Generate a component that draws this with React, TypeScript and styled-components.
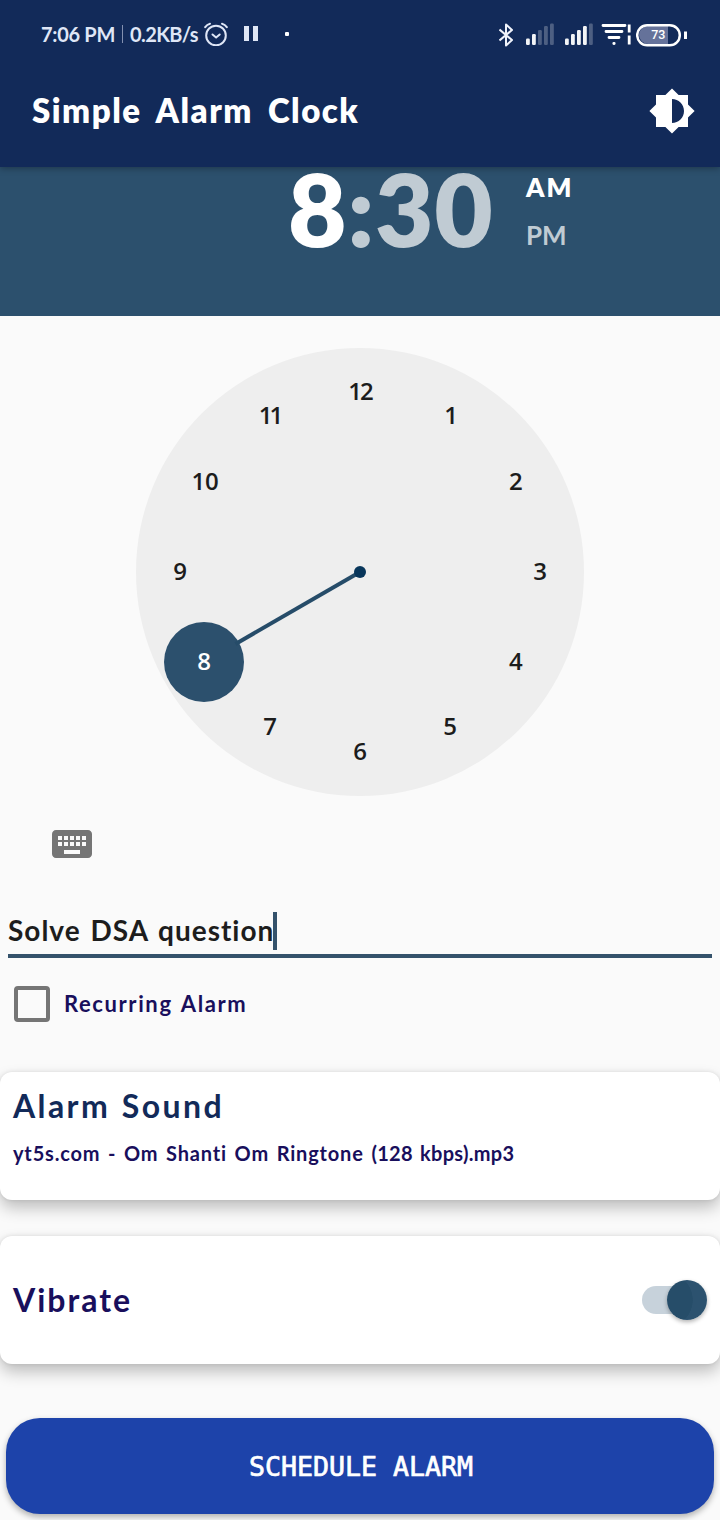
import React from "react";
import styled, { createGlobalStyle } from "styled-components";
import { MdBrightnessMedium, MdKeyboard } from "react-icons/md";

const GlobalStyle = createGlobalStyle`
  * { box-sizing: border-box; }
  body {
    margin: 0;
    background: #fafafa;
    font-family: Lato, "Open Sans", sans-serif;
    font-weight: 700;
  }
`;

const Screen = styled.main`
  width: 720px;
  height: 1520px;
  overflow: hidden;
  display: flex;
  flex-direction: column;
  background: #fafafa;
`;

const Text = styled.span<{ $size: number; $ls?: number; $ws?: number; $color?: string; $weight?: number }>`
  font-size: ${(p) => p.$size}px;
  letter-spacing: ${(p) => p.$ls ?? 0}px;
  word-spacing: ${(p) => p.$ws ?? 0}px;
  color: ${(p) => p.$color ?? "inherit"};
  font-weight: ${(p) => p.$weight ?? 700};
  white-space: pre;
`;

const Header = styled.header`
  position: relative;
  z-index: 1;
  flex: none;
  height: 167px;
  background: #122a59;
  color: #fff;
  box-shadow: 0 1px 7px rgba(0, 0, 0, 0.35);
`;

const StatusBar = styled.div`
  height: 69px;
  padding: 0 33px 0 41px;
  display: flex;
  justify-content: space-between;
  align-items: center;
  color: #dfe6f6;
`;

const StatusGroup = styled.div<{ $raised?: boolean }>`
  display: flex;
  align-items: center;
  height: 24px;
  margin-bottom: ${(p) => (p.$raised ? 2 : 0)}px;
`;

const Separator = styled.i`
  width: 1px;
  height: 18px;
  margin: 0 7px;
  background: #8390b0;
`;

const StatusIcon = styled.svg<{ $ml?: number }>`
  display: block;
  flex: none;
  margin-left: ${(p) => p.$ml ?? 0}px;
`;

const AppBar = styled.div`
  height: 84px;
  padding: 0 24px 0 32px;
  display: flex;
  align-items: center;
  justify-content: space-between;
`;

const Title = styled.h1`
  margin: 0 0 2px;
  line-height: 40px;
  font-size: 33px;
`;

const TimeHeader = styled.section`
  flex: none;
  height: 149px;
  padding-left: 288px;
  display: flex;
  align-items: flex-start;
  background: #2c506d;
  color: #c0cbd3;
`;

const Digits = styled.div`
  width: 238px;
  height: 86px;
  line-height: 82px;
  font-size: 101px;
  font-weight: 800;
  letter-spacing: 0.8px;
  white-space: nowrap;
`;

const Hour = styled.span`
  color: #fff;
`;

const Period = styled.div`
  display: flex;
  flex-direction: column;
  line-height: 48px;
  margin-top: -4px;
`;

const DialArea = styled.section`
  flex: none;
  height: 504px;
  padding-top: 32px;
  display: flex;
  justify-content: center;
  align-items: flex-start;
`;

const Dial = styled.svg`
  display: block;
  font-family: "Open Sans", sans-serif;
  font-size: 24px;
  font-weight: 600;
`;

const KeyboardRow = styled.div`
  flex: none;
  height: 48px;
  padding-left: 48px;
  color: #757575;
  svg { display: block; }
`;

const Field = styled.div`
  flex: none;
  height: 90px;
  margin: 0 8px;
  padding-top: 44px;
  display: flex;
  align-items: flex-start;
  border-bottom: 4px solid #34526b;
  line-height: 36px;
`;

const Caret = styled.i`
  width: 4px;
  height: 38px;
  margin-left: -1px;
  background: #34526b;
`;

const CheckRow = styled.label`
  flex: none;
  height: 36px;
  margin: 28px 14px 0;
  display: flex;
  align-items: center;
  gap: 14px;
  line-height: 36px;
`;

const CheckLabel = styled.span`
  height: 36px;
`;

const Checkbox = styled.i`
  width: 36px;
  height: 36px;
  border: 4px solid #757575;
  border-radius: 4px;
`;

const Card = styled.section<{ $row?: boolean }>`
  flex: none;
  height: 128px;
  padding: ${(p) => (p.$row ? "0 13px" : "14px 13px 0")};
  display: flex;
  flex-direction: ${(p) => (p.$row ? "row" : "column")};
  align-items: ${(p) => (p.$row ? "center" : "flex-start")};
  justify-content: ${(p) => (p.$row ? "space-between" : "flex-start")};
  line-height: 40px;
  border-radius: 12px;
  background: #fff;
  box-shadow: 0 8px 16px rgba(0, 0, 0, 0.24), 0 0 4px rgba(0, 0, 0, 0.1);
`;

const Cards = styled.div`
  flex: none;
  margin-top: 50px;
  display: flex;
  flex-direction: column;
  gap: 36px;
`;

const FileName = styled.div`
  margin-top: 8px;
  line-height: 38px;
  white-space: nowrap;
`;

const Track = styled.div`
  width: 65px;
  height: 28px;
  display: flex;
  align-items: center;
  justify-content: flex-end;
  border-radius: 14px;
  background: linear-gradient(to right, #c7d2db 50px, transparent 50px);
`;

const Thumb = styled.i`
  width: 40px;
  height: 40px;
  flex: none;
  border-radius: 50%;
  background: radial-gradient(circle 28px at -2px 20px, #264d69 98%, #2c526f 100%);
  box-shadow: 0 2px 4px rgba(0, 0, 0, 0.3);
`;

const ScheduleButton = styled.button`
  flex: none;
  height: 96px;
  margin: 54px 6px 0;
  padding: 0 0 0 2px;
  border: 0;
  border-radius: 34px;
  background: #1d43aa;
  color: #fff;
  font: 400 26.6px "DejaVu Sans Mono", monospace;
  -webkit-text-stroke: 0.7px #fff;
  box-shadow: 0 3px 6px rgba(0, 0, 0, 0.3);
`;

const hours = [1, 2, 3, 4, 5, 6, 7, 8, 9, 10, 11, 12];

const hourSpacing: Record<number, number> = { 11: -3, 12: -2 };

function Signal({ level, ml }: { level: number; ml: number }) {
  const heights = [6.5, 11, 15, 19, 21.5];
  return (
    <StatusIcon $ml={ml} width="28" height="24" viewBox="0 0 28 24">
      {heights.map((h, i) => (
        <rect key={i} x={i * 6} y={22 - h} width="3.8" height={h} rx="1.2" fill="#fff" opacity={i < level ? 0.95 : 0.25} />
      ))}
    </StatusIcon>
  );
}

export default function App() {
  return (
    <Screen>
      <GlobalStyle />
      <Header>
        <StatusBar>
          <StatusGroup $raised>
            <Text $size={20} $ls={-0.3}>7:06 PM</Text>
            <Separator />
            <Text $size={20} $ls={-0.6}>0.2KB/s</Text>
            <StatusIcon $ml={6} width="24" height="24" viewBox="0 0 24 24" fill="none" stroke="currentColor" strokeWidth="2" strokeLinecap="round">
              <circle cx="12" cy="13.5" r="9.8" />
              <path d="M1.2 5.1Q3 2.5 6 1.7M22.8 5.1Q21 2.5 18 1.7" />
              <path d="M8.5 12.5l3.6 3 3.6-3" />
            </StatusIcon>
            <StatusIcon $ml={16} width="14" height="15" viewBox="0 0 14 15" fill="currentColor">
              <path d="M0 0h5v15H0zM9 0h5v15H9z" />
            </StatusIcon>
            <StatusIcon $ml={27} width="4" height="4" viewBox="0 0 4 4" fill="#fff">
              <rect width="4" height="4" rx="1" />
            </StatusIcon>
          </StatusGroup>
          <StatusGroup>
            <StatusIcon width="15" height="24" viewBox="0 0 15 24" fill="none" stroke="#f0f3fb" strokeWidth="2" strokeLinejoin="round">
              <path d="M0.5 6.5L13 17 7 22.5V1.5L13 7 0.5 17.5" />
            </StatusIcon>
            <Signal level={2} ml={12} />
            <Signal level={4} ml={11} />
            <StatusIcon $ml={8} width="31" height="24" viewBox="0 0 31 24" fill="none" stroke="#fff" strokeWidth="2.8" strokeLinecap="round">
              <path d="M2 2.5H24M5 8.5H21M8 14.5H18M12.8 20.5h.4" />
              <path d="M28.2 1.5v8M28.2 12.5v9" strokeLinecap="butt" />
            </StatusIcon>
            <StatusIcon $ml={4} width="51" height="24" viewBox="0 0 51 24">
              <path d="M12 3H32V21H12A9 9 0 0 1 12 3Z" fill="#65729a" />
              <rect x="1.2" y="2.2" width="42.6" height="20" rx="10" fill="none" stroke="#fff" strokeWidth="2.5" />
              <path d="M48 8.5h3v7.5h-3z" fill="#fff" />
              <text x="22.3" y="16" textAnchor="middle" fill="#fff" fontFamily="Roboto, sans-serif" fontSize="12.5" fontWeight="500">73</text>
            </StatusIcon>
          </StatusGroup>
        </StatusBar>
        <AppBar>
          <Title><Text $size={33} $ls={1.5} $ws={6} $weight={800}>Simple Alarm Clock</Text></Title>
          <MdBrightnessMedium size={48} />
        </AppBar>
      </Header>

      <TimeHeader>
        <Digits><Hour>8</Hour>:30</Digits>
        <Period>
          <Text $size={26} $ls={2} $color="#fff" $weight={800}>AM</Text>
          <Text $size={26}>PM</Text>
        </Period>
      </TimeHeader>

      <DialArea>
        <Dial width="448" height="448" viewBox="-224 -224 448 448">
          <circle r="224" fill="#eee" />
          <circle cx="-156" cy="90" r="40" fill="#2c506d" />
          <path d="M0 0L-124.5 72" stroke="#264c69" strokeWidth="4" />
          <circle r="6" fill="#08365b" />
          {hours.map((h) => {
            const a = (h * Math.PI) / 6;
            const spacing = hourSpacing[h] ?? 0;
            return (
              <text
                key={h}
                x={180 * Math.sin(a) + spacing / 2 + (h > 9 || h === 1 ? 1 : 0)}
                y={-180 * Math.cos(a) + 7.5}
                letterSpacing={spacing}
                textAnchor="middle"
                fill={h === 8 ? "#fff" : "#1c1c1c"}
              >
                {h}
              </text>
            );
          })}
        </Dial>
      </DialArea>

      <KeyboardRow><MdKeyboard size={48} /></KeyboardRow>

      <Field>
        <Text $size={28} $ls={1} $ws={2} $color="#1d1d1d">Solve DSA question</Text>
        <Caret />
      </Field>

      <CheckRow>
        <Checkbox />
        <CheckLabel><Text $size={22} $ls={1.6} $ws={2} $color="#190f5c">Recurring Alarm</Text></CheckLabel>
      </CheckRow>

      <Cards>
        <Card>
          <Text $size={32} $ls={2.4} $ws={1.5} $color="#122a59">Alarm Sound</Text>
          <FileName>
            <Text $size={20} $ls={0.82} $ws={2} $color="#190f5c">yt5s.com - Om Shanti Om Ringtone </Text>
            <Text $size={20} $ls={0.3} $ws={2} $color="#190f5c">(128 kbps).mp3</Text>
          </FileName>
        </Card>
        <Card $row>
          <Text $size={32} $ls={2} $color="#190f5c">Vibrate</Text>
          <Track><Thumb /></Track>
        </Card>
      </Cards>

      <ScheduleButton>SCHEDULE ALARM</ScheduleButton>
    </Screen>
  );
}
